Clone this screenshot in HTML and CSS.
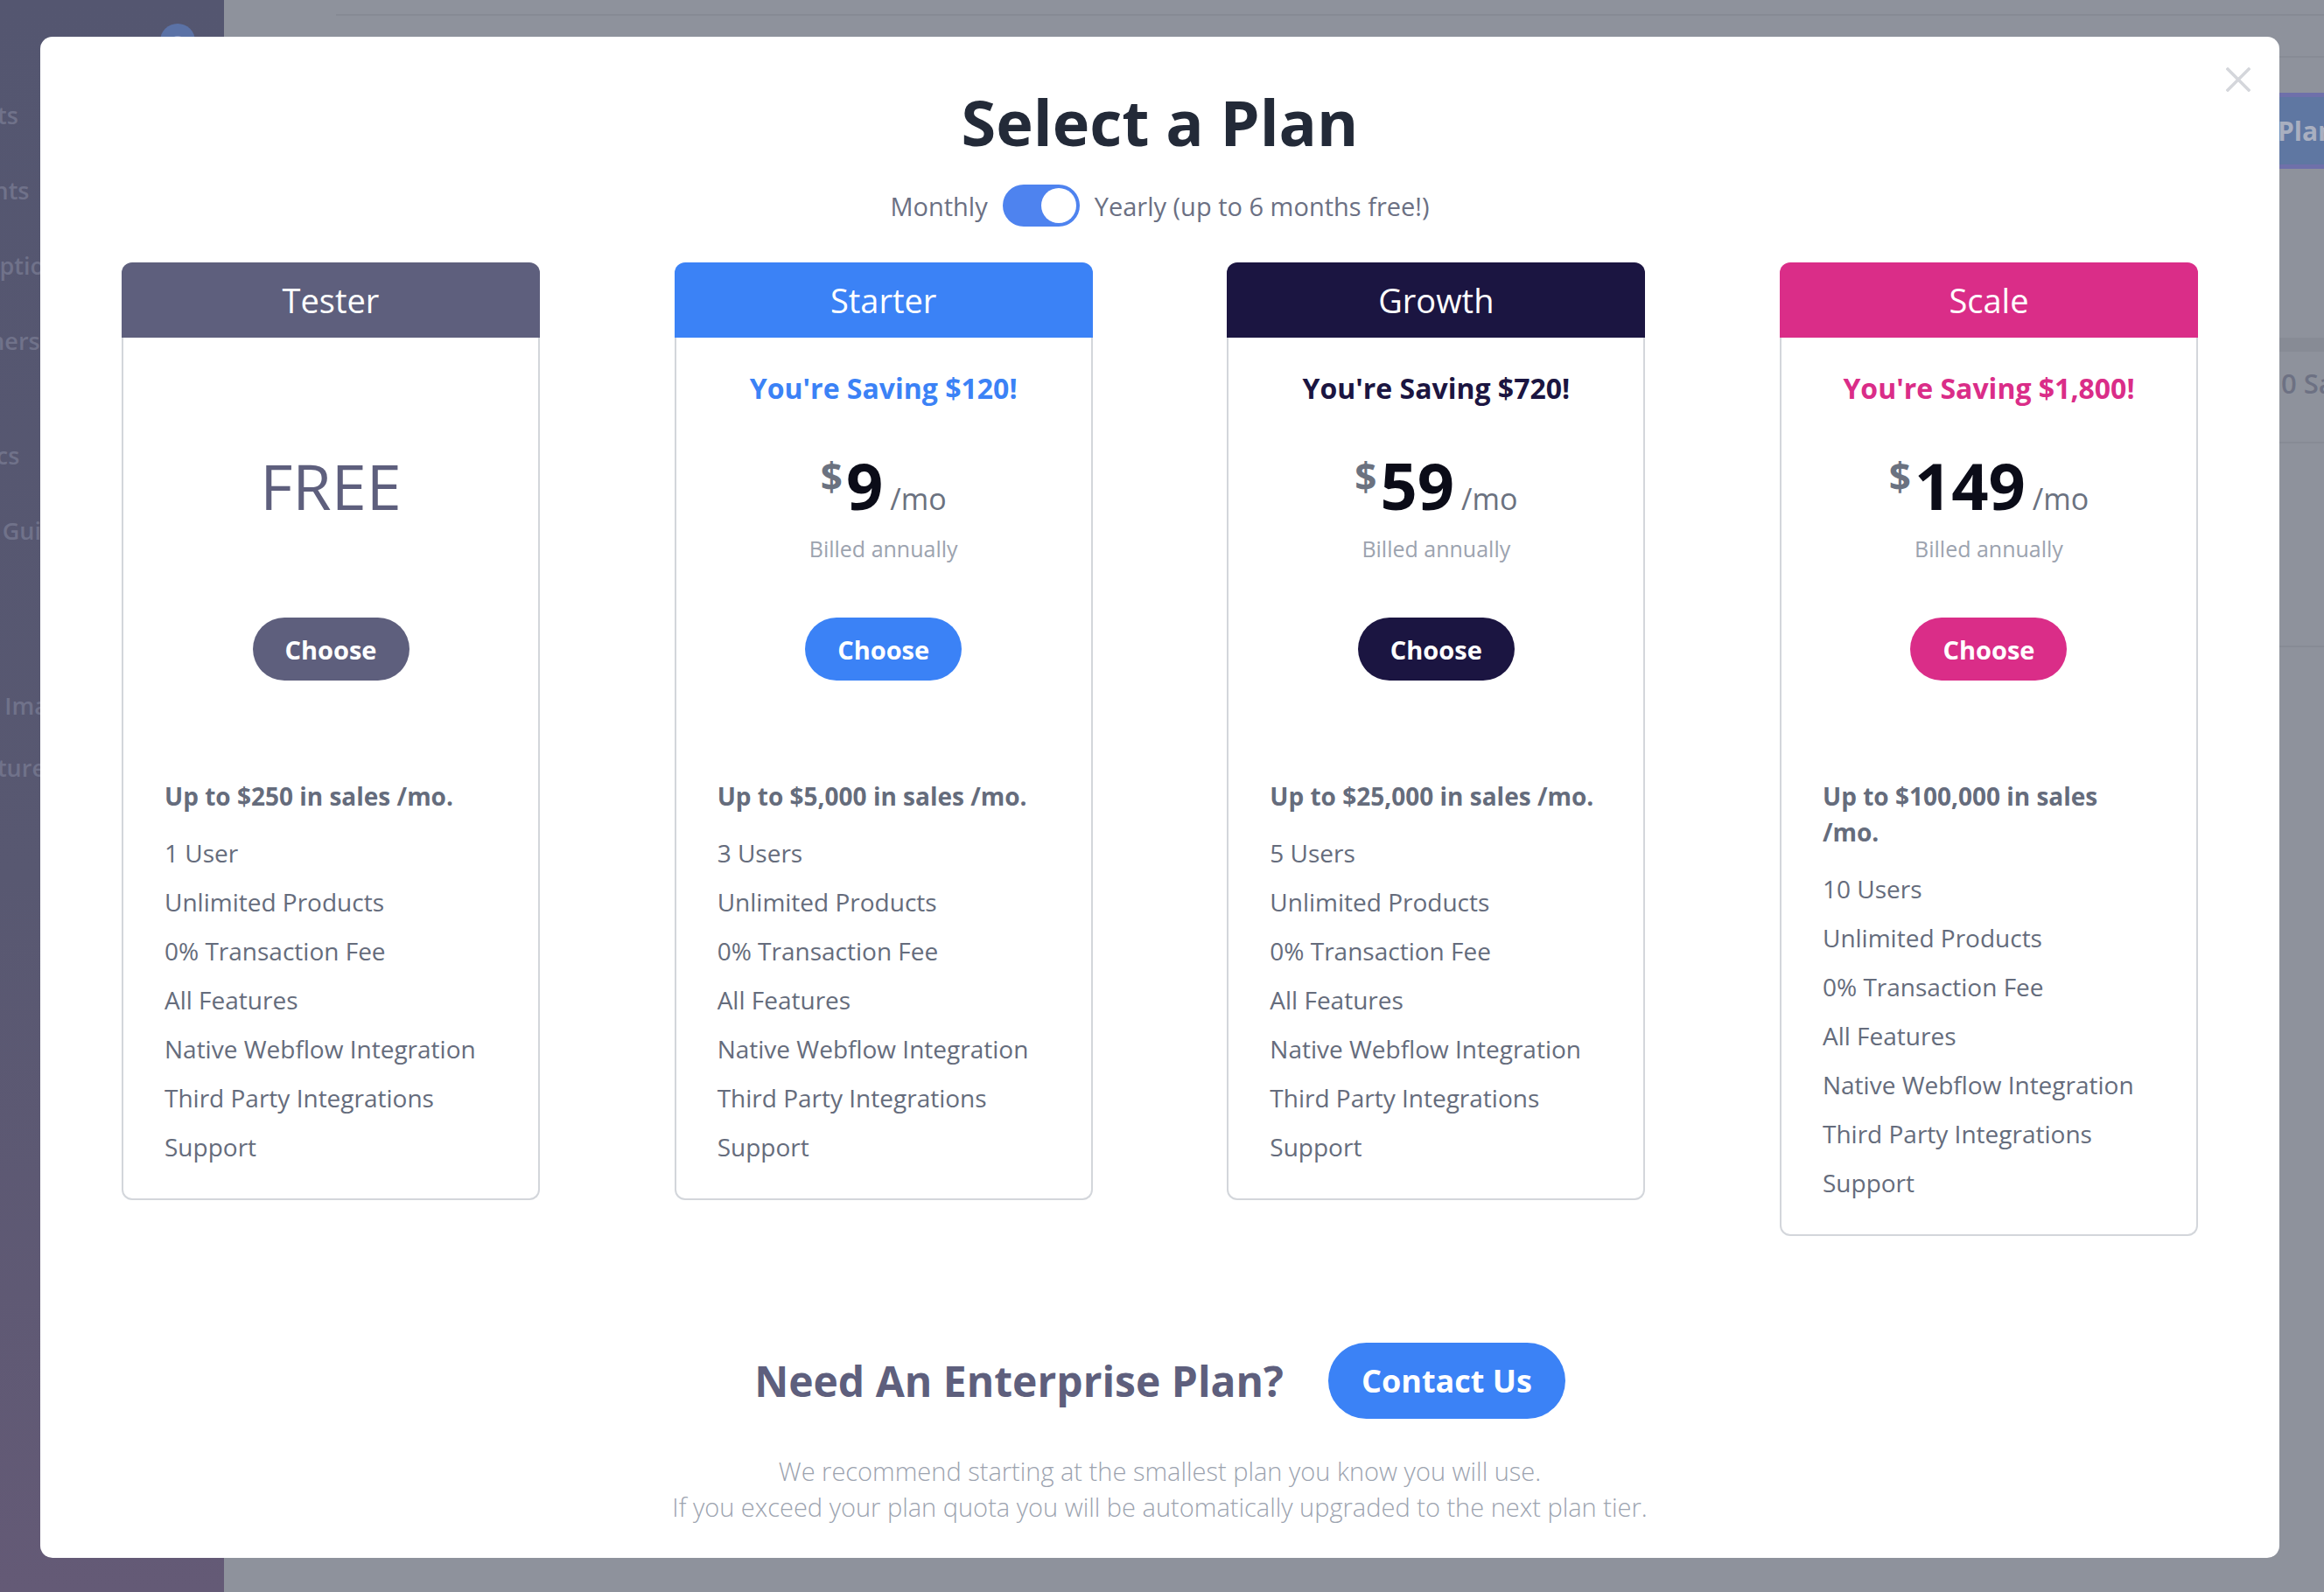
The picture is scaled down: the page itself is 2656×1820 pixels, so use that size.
FILE: index.html
```html
<!DOCTYPE html>
<html lang="en">
<head>
<meta charset="utf-8">
<title>Select a Plan</title>
<link rel="stylesheet" href="styles.css">
</head>
<body>
<div class="app">
  <aside class="sidebar">
    <div class="sb-top"><span class="sb-badge">2</span></div>
    <nav class="sb-nav">
      <div class="sb-group sb-group-1">
        <div class="sb-item">Products</div>
        <div class="sb-item">Discounts</div>
        <div class="sb-item">Subscriptions</div>
        <div class="sb-item">Customers</div>
      </div>
      <div class="sb-group sb-group-2">
        <div class="sb-item">Analytics</div>
        <div class="sb-item">Starter Guide</div>
      </div>
      <div class="sb-group sb-group-3">
        <div class="sb-item sb-item-sm">Upload Images</div>
        <div class="sb-item sb-item-sm">My Features</div>
      </div>
    </nav>
  </aside>
  <main class="main">
    <div class="main-topbar"></div>
    <div class="main-rule main-rule-1"></div>
    <div class="main-actions"><span class="plan-btn">Plan</span></div>
    <div class="main-band"></div>
    <div class="main-row"><span class="main-row-text">0 Sales</span></div>
    <div class="main-rule main-rule-2"></div>
    <div class="main-rule main-rule-3"></div>
  </main>
</div>

<div class="overlay">
  <div class="modal">
    <button class="close" aria-label="Close">
      <svg viewBox="0 0 28 28" width="28" height="28"><path d="M2 2 L26 26 M26 2 L2 26" stroke="#d4d6db" stroke-width="3.5" stroke-linecap="square" fill="none"/></svg>
    </button>

    <h1 class="title">Select a Plan</h1>

    <div class="billing-toggle">
      <span class="toggle-label">Monthly</span>
      <span class="toggle"><span class="toggle-knob"></span></span>
      <span class="toggle-label">Yearly (up to 6 months free!)</span>
    </div>

    <div class="plans">
      <section class="plan plan-tester">
        <header class="plan-head">Tester</header>
        <div class="plan-body">
          <div class="plan-top">
            <div class="saving"></div>
            <div class="price"><span class="free">FREE</span></div>
            <div class="billed"></div>
            <div class="choose-wrap"><span class="choose">Choose</span></div>
          </div>
          <div class="features">
            <p class="feat-title">Up to $250 in sales /mo.</p>
            <ul>
              <li>1 User</li>
              <li>Unlimited Products</li>
              <li>0% Transaction Fee</li>
              <li>All Features</li>
              <li>Native Webflow Integration</li>
              <li>Third Party Integrations</li>
              <li>Support</li>
            </ul>
          </div>
        </div>
      </section>

      <section class="plan plan-starter">
        <header class="plan-head">Starter</header>
        <div class="plan-body">
          <div class="plan-top">
            <div class="saving">You're Saving $120!</div>
            <div class="price"><span class="cur">$</span><span class="amt">9</span><span class="per">/mo</span></div>
            <div class="billed">Billed annually</div>
            <div class="choose-wrap"><span class="choose">Choose</span></div>
          </div>
          <div class="features">
            <p class="feat-title">Up to $5,000 in sales /mo.</p>
            <ul>
              <li>3 Users</li>
              <li>Unlimited Products</li>
              <li>0% Transaction Fee</li>
              <li>All Features</li>
              <li>Native Webflow Integration</li>
              <li>Third Party Integrations</li>
              <li>Support</li>
            </ul>
          </div>
        </div>
      </section>

      <section class="plan plan-growth">
        <header class="plan-head">Growth</header>
        <div class="plan-body">
          <div class="plan-top">
            <div class="saving">You're Saving $720!</div>
            <div class="price"><span class="cur">$</span><span class="amt">59</span><span class="per">/mo</span></div>
            <div class="billed">Billed annually</div>
            <div class="choose-wrap"><span class="choose">Choose</span></div>
          </div>
          <div class="features">
            <p class="feat-title">Up to $25,000 in sales /mo.</p>
            <ul>
              <li>5 Users</li>
              <li>Unlimited Products</li>
              <li>0% Transaction Fee</li>
              <li>All Features</li>
              <li>Native Webflow Integration</li>
              <li>Third Party Integrations</li>
              <li>Support</li>
            </ul>
          </div>
        </div>
      </section>

      <section class="plan plan-scale">
        <header class="plan-head">Scale</header>
        <div class="plan-body">
          <div class="plan-top">
            <div class="saving">You're Saving $1,800!</div>
            <div class="price"><span class="cur">$</span><span class="amt">149</span><span class="per">/mo</span></div>
            <div class="billed">Billed annually</div>
            <div class="choose-wrap"><span class="choose">Choose</span></div>
          </div>
          <div class="features">
            <p class="feat-title">Up to $100,000 in sales /mo.</p>
            <ul>
              <li>10 Users</li>
              <li>Unlimited Products</li>
              <li>0% Transaction Fee</li>
              <li>All Features</li>
              <li>Native Webflow Integration</li>
              <li>Third Party Integrations</li>
              <li>Support</li>
            </ul>
          </div>
        </div>
      </section>
    </div>

    <div class="enterprise">
      <h2 class="enterprise-title">Need An Enterprise Plan?</h2>
      <span class="contact">Contact Us</span>
    </div>

    <p class="footnote">We recommend starting at the smallest plan you know you will use.<br>If you exceed your plan quota you will be automatically upgraded to the next plan tier.</p>
  </div>
</div>
</body>
</html>
```

FILE: styles.css
```css
* { box-sizing: border-box; margin: 0; padding: 0; }

html, body {
  width: 2656px;
  height: 1820px;
  overflow: hidden;
}

body {
  font-family: "Open Sans", "Noto Sans", sans-serif;
  background: #8e929c;
}

/* ---------- background app (under the overlay) ---------- */
.app {
  display: flex;
  height: 1820px;
}

.sidebar {
  width: 256px;
  flex: none;
  overflow: hidden;
  background: linear-gradient(180deg, #545670 0%, #585871 55%, #645a76 100%);
}

.sb-top {
  display: flex;
  justify-content: flex-end;
  padding: 27px 33px 0 0;
}

.sb-badge {
  width: 40px;
  height: 40px;
  border-radius: 50%;
  background: #5b72a6;
  color: #8797c2;
  font-size: 22px;
  font-weight: 700;
  display: flex;
  align-items: center;
  justify-content: center;
}

.sb-nav {
  margin-left: -95px;
  padding-top: 22px;
  white-space: nowrap;
}

.sb-item {
  height: 86px;
  line-height: 86px;
  font-size: 27px;
  font-weight: 600;
  color: #70728a;
}

.sb-item-sm {
  height: 71px;
  line-height: 71px;
}

.sb-group-2 { margin-top: 45px; }
.sb-group-3 { margin-top: 121px; }

.main {
  flex: 1;
  overflow: hidden;
  background: #8e929c;
}

.main-topbar {
  height: 18px;
  margin-left: 128px;
  border-bottom: 2px solid #868a94;
}

.main-rule {
  border-top: 2px solid #878b95;
}

.main-rule-1 { margin-top: 46px; }

.main-actions {
  margin-top: 40px;
  display: flex;
  justify-content: flex-end;
}

.plan-btn {
  width: 150px;
  height: 87px;
  margin-right: -97px;
  background: #5f77a2;
  border-top: 5px solid #6f70aa;
  border-bottom: 5px solid #6f70aa;
  color: #a9afc0;
  font-size: 30px;
  font-weight: 700;
  display: flex;
  align-items: center;
}

.main-band {
  margin-top: 193px;
  height: 16px;
  background: #878b95;
}

.main-row {
  height: 72px;
  display: flex;
  justify-content: flex-end;
  align-items: center;
}

.main-row-text {
  width: 49px;
  overflow: hidden;
  white-space: nowrap;
  font-size: 31px;
  font-weight: 600;
  color: #6d7183;
}

.main-rule-2 { margin-top: 31px; }
.main-rule-3 { margin-top: 231px; }

/* ---------- modal ---------- */
.overlay {
  position: fixed;
  inset: 0;
  padding: 42px 0 0 46px;
}

.modal {
  position: relative;
  width: 2559px;
  background: #ffffff;
  border-radius: 14px;
  padding: 53px 93px 38px;
}

.close {
  position: absolute;
  top: 35px;
  right: 33px;
  width: 28px;
  height: 28px;
  border: 0;
  background: none;
  display: block;
}

.close svg { display: block; }

.title {
  font-size: 72px;
  font-weight: 700;
  line-height: 89px;
  text-align: center;
  color: #232a38;
}

.billing-toggle {
  margin-top: 27px;
  height: 48px;
  display: flex;
  justify-content: center;
  align-items: center;
  gap: 17px;
}

.toggle-label {
  font-size: 29px;
  color: #6b7083;
}

.toggle {
  width: 88px;
  height: 48px;
  border-radius: 24px;
  background: #4e83ef;
  display: flex;
  justify-content: flex-end;
  align-items: center;
  padding: 0 4px;
}

.toggle-knob {
  width: 40px;
  height: 40px;
  border-radius: 50%;
  background: #ffffff;
}

/* ---------- plans ---------- */
.plans {
  margin-top: 41px;
  display: grid;
  grid-template-columns: repeat(4, 478px);
  justify-content: space-between;
  align-items: start;
}

.plan-head {
  height: 86px;
  line-height: 86px;
  border-radius: 12px 12px 0 0;
  text-align: center;
  font-size: 38px;
  font-weight: 500;
  color: #ffffff;
}

.plan-tester .plan-head { background: #5e5f7d; }
.plan-starter .plan-head { background: #3b82f6; }
.plan-growth .plan-head { background: #1b1541; }
.plan-scale .plan-head { background: #da2d88; }

.plan-body {
  border: 2px solid #d3d6db;
  border-top: 0;
  border-radius: 0 0 12px 12px;
  padding: 36px 0 31px;
}

.plan-top {
  text-align: center;
}

.saving {
  height: 44px;
  line-height: 44px;
  font-size: 32px;
  font-weight: 700;
  white-space: nowrap;
}

.plan-starter .saving { color: #3b82f6; }
.plan-growth .saving { color: #1b1541; }
.plan-scale .saving { color: #da2d88; }

.price {
  margin-top: 52px;
  height: 74px;
  display: flex;
  justify-content: center;
  align-items: baseline;
  line-height: 1;
}

.cur {
  align-self: flex-start;
  margin-top: 4px;
  margin-right: 4px;
  font-size: 44px;
  font-weight: 700;
  color: #6b7280;
}

.amt {
  font-size: 74px;
  line-height: 74px;
  font-weight: 700;
  color: #0b0c18;
}

.per {
  margin-left: 8px;
  font-size: 34px;
  color: #6b7280;
}

.free {
  font-size: 72px;
  line-height: 74px;
  font-weight: 500;
  color: #5e5f7d;
}

.billed {
  margin-top: 18px;
  height: 34px;
  line-height: 34px;
  font-size: 25px;
  font-weight: 500;
  color: #9ca3af;
}

.choose-wrap {
  margin-top: 62px;
  display: flex;
  justify-content: center;
}

.choose {
  height: 72px;
  padding: 0 37px;
  border-radius: 36px;
  display: flex;
  align-items: center;
  font-size: 29px;
  font-weight: 700;
  color: #ffffff;
}

.plan-tester .choose { background: #5e5f7d; }
.plan-starter .choose { background: #3b82f6; }
.plan-growth .choose { background: #1b1541; }
.plan-scale .choose { background: #da2d88; }

.features {
  margin-top: 112px;
  padding: 0 51px 0 47px;
  color: #656c7c;
}

.feat-title {
  font-size: 28px;
  font-weight: 700;
  line-height: 41px;
  margin-bottom: 16px;
}

.features ul { list-style: none; }

.features li {
  font-size: 28px;
  line-height: 56px;
}

/* ---------- enterprise ---------- */
.enterprise {
  margin-top: 122px;
  height: 87px;
  display: flex;
  justify-content: center;
  align-items: center;
  gap: 51px;
}

.enterprise-title {
  font-size: 48px;
  font-weight: 700;
  color: #5e5f7d;
  line-height: 1.2;
}

.contact {
  height: 87px;
  padding: 0 38px;
  border-radius: 44px;
  background: #3b82f6;
  color: #ffffff;
  font-size: 36px;
  font-weight: 700;
  display: flex;
  align-items: center;
}

.footnote {
  margin-top: 39px;
  text-align: center;
  font-size: 29px;
  font-weight: 300;
  line-height: 41px;
  color: #9ca3af;
}
```
